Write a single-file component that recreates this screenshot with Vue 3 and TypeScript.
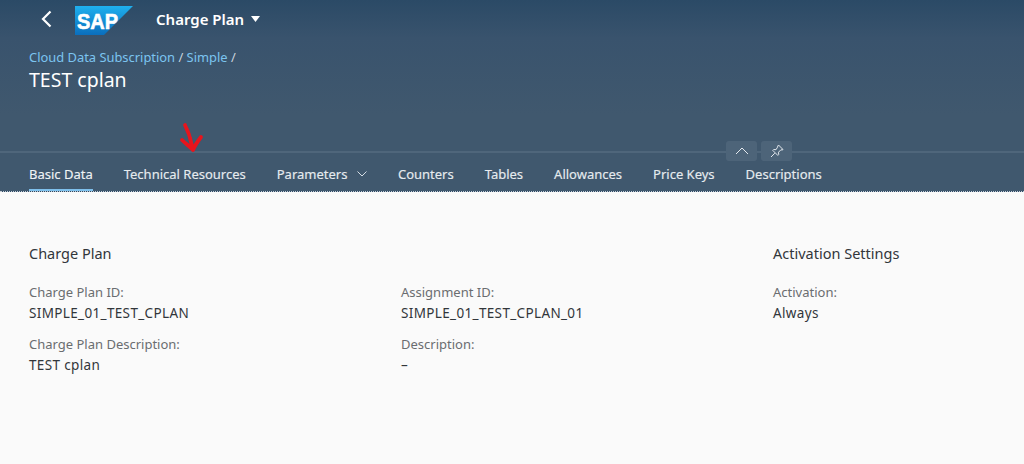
<script setup lang="ts">
interface Tab { label: string; active?: boolean; menu?: boolean }
const tabs: Tab[] = [
  { label: 'Basic Data', active: true },
  { label: 'Technical Resources' },
  { label: 'Parameters', menu: true },
  { label: 'Counters' },
  { label: 'Tables' },
  { label: 'Allowances' },
  { label: 'Price Keys' },
  { label: 'Descriptions' },
]
const leftCols = [
  [
    { label: 'Charge Plan ID:', value: 'SIMPLE_01_TEST_CPLAN' },
    { label: 'Charge Plan Description:', value: 'TEST cplan' },
  ],
  [
    { label: 'Assignment ID:', value: 'SIMPLE_01_TEST_CPLAN_01' },
    { label: 'Description:', value: '–' },
  ],
]
</script>

<template>
  <div class="page">
    <header class="top">
      <div class="shell">
        <svg class="back" width="14" height="18" viewBox="0 0 14 18"><path d="M11.500 1.500 4 9l7.500 7.500" fill="none" stroke="#fff" stroke-width="2.200"/></svg>
        <svg class="logo" width="58" height="29" viewBox="0 0 58 29">
          <defs><linearGradient id="sapg" x1="0" y1="0" x2="0" y2="1"><stop offset="0" stop-color="#1fb0ee"/><stop offset="1" stop-color="#0a6ebd"/></linearGradient></defs>
          <polygon points="0,0 58,0 29,29 0,29" fill="url(#sapg)"/>
          <text x="2" y="23" font-family="Liberation Sans, sans-serif" font-size="22" font-weight="700" fill="#fff" stroke="#fff" stroke-width="0.6" textLength="41" lengthAdjust="spacingAndGlyphs">SAP</text>
        </svg>
        <span class="app-title">Charge Plan</span>
        <svg class="caret" width="9" height="6" viewBox="0 0 9 6"><path d="M0 0h9L4.500 6z" fill="#fff"/></svg>
      </div>
      <div class="title-area">
        <div class="crumbs"><span class="link">Cloud Data Subscription</span> / <span class="link">Simple</span> /</div>
        <h1 class="title">TEST cplan</h1>
      </div>
      <div class="divider">
        <div class="tools">
          <span class="tool"><svg width="14" height="8" viewBox="0 0 14 8"><path d="M1 7l6-6 6 6" fill="none" stroke="#e4e9ee" stroke-width="1"/></svg></span>
          <span class="tool"><svg width="14" height="14" viewBox="0 0 14 14"><path d="M8.500 1 13 5.500l-1 .6-1-.4-2.500 2.500.2 2.300-.9.9-5-5 .9-.9 2.300.2L7.500 3.200 7.900 2zM4.800 9.200 1 13" fill="none" stroke="#e4e9ee" stroke-width="1"/></svg></span>
        </div>
      </div>
      <nav class="tabs">
        <div v-for="t in tabs" :key="t.label" class="tab" :class="{ active: t.active }">
          <span>{{ t.label }}</span>
          <svg v-if="t.menu" class="chev" width="10" height="6" viewBox="0 0 10 6"><path d="M.5.5 5 5 9.500.5" fill="none" stroke="#d5dde4" stroke-width="1"/></svg>
        </div>
      </nav>
      <svg class="arrow" width="26" height="32" viewBox="0 0 26 32"><path d="M6 3c1 3 4 8 5 13l3 12M3 18c3 3 7 6 11 10 2-5 5-9 8-13" fill="none" stroke="#e8141c" stroke-width="3.800" stroke-linecap="round" stroke-linejoin="round"/></svg>
    </header>
    <main class="content">
      <div class="main-section">
        <h2 class="heading">Charge Plan</h2>
        <div class="cols">
          <div v-for="(col, i) in leftCols" :key="i" class="col">
            <div v-for="f in col" :key="f.label" class="field">
              <div class="label">{{ f.label }}</div>
              <div class="value">{{ f.value }}</div>
            </div>
          </div>
        </div>
      </div>
      <div class="side-section">
        <h2 class="heading">Activation Settings</h2>
        <div class="field">
          <div class="label">Activation:</div>
          <div class="value">Always</div>
        </div>
      </div>
    </main>
  </div>
</template>

<style>
html, body { margin: 0; background: #fafafa; }
</style>

<style scoped>
.page { width: 1024px; height: 464px; overflow: hidden; font-family: "Noto Sans", "Open Sans", sans-serif; background: #fafafa; }
.top { position: relative; height: 192px; box-sizing: border-box; background: linear-gradient(180deg, #2b4a66 0%, #39536d 20%, #40586e 60%, #40586e 100%); border-bottom: 1px dotted #c8ced4; }
.shell { height: 38px; display: flex; align-items: center; padding-left: 39px; }
.back { margin-right: 22px; }
.logo { margin-right: 23px; margin-top: 2px; }
.app-title { color: #fff; font-size: 15px; font-weight: 600; margin-right: 7px; }
.title-area { padding: 10px 29px 0; height: 73px; box-sizing: border-box; }
.crumbs { color: #c9d3dc; font-size: 12.9px; line-height: 18px; }
.link { color: #7cc4f0; }
.title { margin: 3px 0 0; color: #fff; font-size: 19.500px; line-height: 22px; font-weight: 400; }
.divider { position: relative; margin-top: 40px; height: 2px; background: #4f667b; }
.tools { position: absolute; left: 726px; top: -10px; display: flex; gap: 4px; }
.tool { width: 31px; height: 20px; border-radius: 3px; background: #4d6479; display: flex; align-items: center; justify-content: center; }
.tabs { display: flex; gap: 31px; padding-left: 29px; height: 38px; box-sizing: border-box; }
.tab { display: flex; align-items: center; gap: 9.500px; height: 38px; box-sizing: border-box; padding-top: 3px; color: #e6ebef; font-size: 13px; white-space: nowrap; -webkit-text-stroke: 0.15px #e6ebef; }
.tab.active { color: #f2f5f7; box-shadow: inset 0 -2px 0 #7fc0ec; }
.arrow { position: absolute; left: 179px; top: 122px; }
.content { display: flex; padding: 51px 29px 0; }
.main-section { width: 744px; }
.heading { margin: 0 0 19px; font-size: 14.500px; line-height: 20px; font-weight: 400; color: #32363a; }
.cols { display: flex; }
.col { width: 372px; }
.field { margin-bottom: 11px; }
.label { color: #6a6d70; font-size: 13px; line-height: 20px; }
.value { color: #32363a; font-size: 13.500px; letter-spacing: 0.35px; line-height: 20px; margin-top: 1px; }
</style>
